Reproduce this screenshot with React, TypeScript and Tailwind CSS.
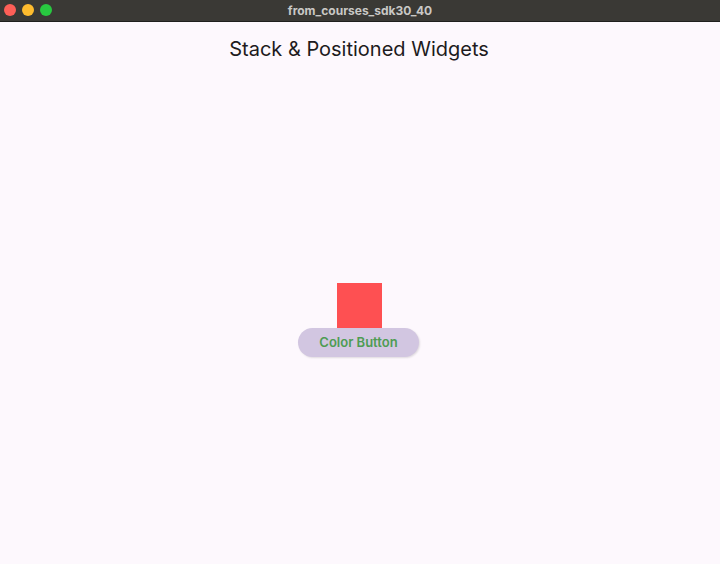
export default function App() {
  return (
    <div className="flex h-[564px] w-[720px] flex-col overflow-hidden bg-[#fdf8fd] font-['Inter','Roboto',sans-serif]">
      {/* window title bar */}
      <div className="relative flex h-[22px] shrink-0 items-center justify-center border-b border-[#1f1f1d] bg-[#3a3935]">
        <div className="absolute left-[4px] top-[4px] flex gap-[6px]">
          <span className="h-3 w-3 rounded-full bg-[#fe5f57]" />
          <span className="h-3 w-3 rounded-full bg-[#febc2e]" />
          <span className="h-3 w-3 rounded-full bg-[#28c840]" />
        </div>
        <span className="text-[12px] font-bold text-[#c9c8c5]">from_courses_sdk30_40</span>
      </div>

      {/* app bar */}
      <div className="flex h-[52px] shrink-0 items-center justify-center pt-[1px] pr-[2px]">
        <h1 className="text-[20px] text-[#1d1b20]">Stack &amp; Positioned Widgets</h1>
      </div>

      {/* body */}
      <div className="flex flex-1 items-center justify-center pt-[2px] pr-[3px]">
        <div className="flex flex-col items-center">
          <div className="ml-[1px] h-[45px] w-[45px] bg-[#fe5052]" />
          <button className="h-[29px] w-[121px] rounded-full bg-[#d2c6e1] text-[13px] font-semibold text-[#4e9c53] shadow-[1px_1px_2px_rgba(0,0,0,0.12)]">
            Color Button
          </button>
        </div>
      </div>
    </div>
  );
}
